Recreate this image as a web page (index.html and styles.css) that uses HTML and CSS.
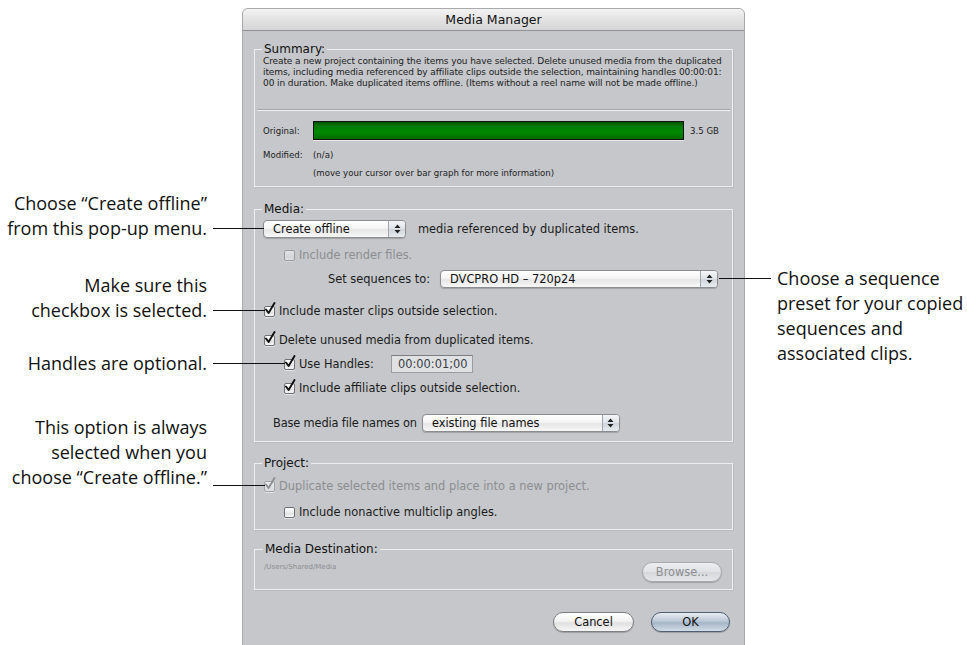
FILE: index.html
```html
<!DOCTYPE html>
<html>
<head>
<meta charset="utf-8">
<link rel="stylesheet" href="styles.css">
</head>
<body>
<div class="page">
  <div class="dialog">
    <div class="titlebar">Media Manager</div>
    <div class="content">
      <fieldset class="group summary">
        <legend>Summary:</legend>
        <p class="summary-text">Create a new project containing the items you have selected. Delete unused media from the duplicated<br>items, including media referenced by affiliate clips outside the selection, maintaining handles 00:00:01:<br>00 in duration. Make duplicated items offline. (Items without a reel name will not be made offline.)</p>
        <div class="sep"></div>
        <div class="stat-row original">
          <span class="stat-label">Original:</span>
          <span class="bar"></span>
          <span class="stat-size">3.5 GB</span>
        </div>
        <div class="stat-row modified">
          <span class="stat-label">Modified:</span>
          <span>(n/a)</span>
        </div>
        <div class="hint">(move your cursor over bar graph for more information)</div>
      </fieldset>

      <fieldset class="group media">
        <legend>Media:</legend>
        <div class="row r-create">
          <span class="popup popup-create"><span class="popup-label">Create offline</span><span class="popup-arrows"><svg width="7" height="10" viewBox="0 0 7 10"><path d="M3.5 0.5 L6.5 4 L0.5 4 Z M3.5 9.5 L6.5 6 L0.5 6 Z" fill="#222"/></svg></span></span>
          <span class="txt">media referenced by duplicated items.</span>
        </div>
        <div class="row r-render indent2 disabled">
          <span class="cb cb-off"></span>
          <span class="txt">Include render files.</span>
        </div>
        <div class="row r-seq">
          <span class="txt seq-label">Set sequences to:</span>
          <span class="popup popup-seq"><span class="popup-label">DVCPRO HD – 720p24</span><span class="popup-arrows"><svg width="7" height="10" viewBox="0 0 7 10"><path d="M3.5 0.5 L6.5 4 L0.5 4 Z M3.5 9.5 L6.5 6 L0.5 6 Z" fill="#222"/></svg></span></span>
        </div>
        <div class="row r-master indent1">
          <span class="cb"><svg class="check" width="12" height="13" viewBox="0 0 12 13"><path d="M2 7.5 L4.6 11 L10.5 1" fill="none" stroke="#111" stroke-width="1.9" stroke-linecap="round" stroke-linejoin="round"/></svg></span>
          <span class="txt">Include master clips outside selection.</span>
        </div>
        <div class="row r-delete indent1">
          <span class="cb"><svg class="check" width="12" height="13" viewBox="0 0 12 13"><path d="M2 7.5 L4.6 11 L10.5 1" fill="none" stroke="#111" stroke-width="1.9" stroke-linecap="round" stroke-linejoin="round"/></svg></span>
          <span class="txt">Delete unused media from duplicated items.</span>
        </div>
        <div class="row r-handles indent2">
          <span class="cb"><svg class="check" width="12" height="13" viewBox="0 0 12 13"><path d="M2 7.5 L4.6 11 L10.5 1" fill="none" stroke="#111" stroke-width="1.9" stroke-linecap="round" stroke-linejoin="round"/></svg></span>
          <span class="txt handles-label">Use Handles:</span>
          <span class="field">00:00:01;00</span>
        </div>
        <div class="row r-affiliate indent2">
          <span class="cb"><svg class="check" width="12" height="13" viewBox="0 0 12 13"><path d="M2 7.5 L4.6 11 L10.5 1" fill="none" stroke="#111" stroke-width="1.9" stroke-linecap="round" stroke-linejoin="round"/></svg></span>
          <span class="txt">Include affiliate clips outside selection.</span>
        </div>
        <div class="row r-base">
          <span class="txt">Base media file names on</span>
          <span class="popup popup-base"><span class="popup-label">existing file names</span><span class="popup-arrows"><svg width="7" height="10" viewBox="0 0 7 10"><path d="M3.5 0.5 L6.5 4 L0.5 4 Z M3.5 9.5 L6.5 6 L0.5 6 Z" fill="#222"/></svg></span></span>
        </div>
      </fieldset>

      <fieldset class="group project">
        <legend>Project:</legend>
        <div class="row r-dup indent1 disabled">
          <span class="cb cb-dis"><svg class="check" width="12" height="13" viewBox="0 0 12 13"><path d="M2 7.5 L4.6 11 L10.5 1" fill="none" stroke="#8d8f92" stroke-width="1.9" stroke-linecap="round" stroke-linejoin="round"/></svg></span>
          <span class="txt">Duplicate selected items and place into a new project.</span>
        </div>
        <div class="row r-nonactive indent2">
          <span class="cb"></span>
          <span class="txt">Include nonactive multiclip angles.</span>
        </div>
      </fieldset>

      <fieldset class="group dest">
        <legend>Media Destination:</legend>
        <div class="dest-row">
          <span class="path">/Users/Shared/Media</span>
          <span class="btn btn-disabled">Browse...</span>
        </div>
      </fieldset>

      <div class="actions">
        <span class="btn btn-cancel">Cancel</span>
        <span class="btn btn-ok">OK</span>
      </div>
    </div>
  </div>

  <div class="callout left c-create">
    <div class="callout-text">Choose “Create offline”<br>from this pop-up menu.</div>
    <span class="leader"></span>
  </div>
  <div class="callout left c-master">
    <div class="callout-text">Make sure this<br>checkbox is selected.</div>
    <span class="leader"></span>
  </div>
  <div class="callout left c-handles">
    <div class="callout-text">Handles are optional.</div>
    <span class="leader"></span>
  </div>
  <div class="callout left c-dup">
    <div class="callout-text">This option is always<br>selected when you<br>choose “Create offline.”</div>
    <span class="leader"></span>
  </div>
  <div class="callout right c-seq">
    <span class="leader"></span>
    <div class="callout-text">Choose a sequence<br>preset for your copied<br>sequences and<br>associated clips.</div>
  </div>
</div>
</body>
</html>
```

FILE: styles.css
```css
* { box-sizing: border-box; }

html, body {
  margin: 0;
  padding: 0;
  background: #ffffff;
}

.page {
  position: relative;
  width: 967px;
  height: 645px;
  overflow: hidden;
  padding: 8px 0 0 242px;
  font-family: "DejaVu Sans", sans-serif;
  color: #1a1a1a;
}

.dialog {
  width: 503px;
  height: 660px;
  background: #c5c7ca;
  border: 1px solid #a7a9ac;
  border-radius: 6px 6px 0 0;
}

.titlebar {
  height: 22px;
  line-height: 21px;
  text-align: center;
  font-size: 12.5px;
  color: #111;
  background: linear-gradient(#f3f3f3, #e0e0e0 60%, #d6d6d6);
  border-bottom: 1px solid #8f9194;
  border-radius: 5px 5px 0 0;
}

.content {
  padding: 12px 11px 0 11px;
}

.group {
  margin: 0;
  padding: 0 8px;
  border: 1px solid #eceef0;
  box-shadow: 1px 1px 0 rgba(0,0,0,0.06);
  min-width: 0;
}

.group legend {
  font-size: 12px;
  line-height: 13px;
  padding: 0 2px;
  margin-left: -1px;
  color: #111;
}

/* ---------- summary ---------- */
.summary {
  padding-bottom: 8px;
}

.summary-text {
  margin: 0;
  font-size: 9px;
  line-height: 11px;
  white-space: nowrap;
  letter-spacing: -0.1px;
  color: #222;
}

.sep {
  height: 1px;
  margin: 21px -6px 0 -6px;
  background: #f0f1f2;
  box-shadow: 0 -1px 0 #a5a7aa;
}

.stat-row {
  display: flex;
  align-items: center;
  font-size: 8.6px;
  color: #222;
}

.original {
  margin-top: 10px;
}

.stat-label {
  width: 50px;
}

.bar {
  width: 371px;
  height: 19px;
  background: linear-gradient(#005400, #007f00 30%, #008a00 60%, #006a00);
  border: 1px solid #111;
  box-shadow: 0 1px 0 #e8e8e8;
}

.stat-size {
  margin-left: 6px;
}

.modified {
  margin-top: 9px;
  height: 12px;
}

.hint {
  margin-top: 7px;
  margin-left: 50px;
  font-size: 8.6px;
  line-height: 10px;
  color: #222;
}

/* ---------- media ---------- */
.media {
  margin-top: 16px;
  padding: 2px 8px 9px 8px;
}

.row {
  display: flex;
  align-items: center;
  font-size: 11.4px;
  height: 18px;
  white-space: nowrap;
}

.indent1 { padding-left: 1px; }
.indent2 { padding-left: 21px; }

.txt { color: #1b1b1b; }

.disabled .txt { color: #8c8e91; }

.r-create { margin-top: 2px; }
.r-create .txt { margin-left: 12px; }
.r-render { margin-top: 8px; }
.r-seq { margin-top: 6px; padding-left: 65px; }
.seq-label { margin-right: 10px; }
.r-master { margin-top: 14px; }
.r-delete { margin-top: 11px; }
.r-handles { margin-top: 6px; }
.r-affiliate { margin-top: 6px; }
.r-base { margin-top: 17px; padding-left: 10px; }
.r-base .txt { margin-right: 5px; letter-spacing: -0.15px; }

.cb {
  position: relative;
  flex: none;
  width: 11px;
  height: 11px;
  margin-right: 4px;
  border: 1px solid #6f7174;
  border-radius: 2px;
  background: linear-gradient(#ffffff, #ececec 50%, #dedede 51%, #f7f7f7);
  box-shadow: 0 1px 0 rgba(255,255,255,0.5);
}

.cb-off { opacity: 0.5; }
.cb-dis { border-color: #a2a4a7; background: linear-gradient(#e9eaeb, #dadbdc); }

.check {
  position: absolute;
  left: -1px;
  top: -5px;
}

.popup {
  display: inline-flex;
  flex: none;
  align-items: stretch;
  height: 18px;
  border: 1px solid #8a8c8f;
  border-radius: 4px;
  background: linear-gradient(#ffffff, #f4f4f4 45%, #e6e6e6 55%, #f8f8f8);
  box-shadow: 0 1px 1px rgba(0,0,0,0.18);
  font-size: 11.4px;
  color: #111;
}

.popup-label {
  flex: 1;
  display: flex;
  align-items: center;
  padding-left: 9px;
}

.popup-arrows {
  width: 17px;
  display: flex;
  align-items: center;
  justify-content: center;
  border-left: 1px solid #a3a5a8;
  border-radius: 0 3px 3px 0;
  background: linear-gradient(#f3f5f8, #dfe3e8 50%, #cfd5dc 51%, #e8ecf0);
}

.popup-create { width: 143px; }
.popup-seq { width: 278px; }
.popup-base { width: 198px; }

.handles-label { width: 92px; }

.field {
  display: inline-flex;
  align-items: center;
  height: 18px;
  width: 82px;
  padding-left: 6px;
  background: #dfe1e3;
  border: 1px solid #9a9c9f;
  border-top-color: #7c7e81;
  color: #3a3d44;
  font-size: 11.4px;
}

/* ---------- project ---------- */
.project {
  margin-top: 15px;
  padding: 7px 8px 8px 8px;
}

.r-nonactive { margin-top: 8px; }

/* ---------- destination ---------- */
.dest {
  margin-top: 13px;
  padding: 0 10px 7px 9px;
}

.dest-row {
  display: flex;
  align-items: flex-start;
  justify-content: space-between;
}

.path {
  font-size: 7px;
  color: #8c8e91;
  margin-top: 7px;
}

.btn {
  display: inline-flex;
  align-items: center;
  justify-content: center;
  height: 20px;
  border-radius: 10px;
  font-size: 11.4px;
  border: 1px solid #7d7f82;
  background: linear-gradient(#ffffff, #f2f2f2 45%, #e0e0e0 55%, #f7f7f7);
  box-shadow: 0 1px 1px rgba(0,0,0,0.2);
  color: #111;
}

.btn-disabled {
  width: 80px;
  margin-top: 6px;
  color: #8c8e91;
  border-color: #a8aaad;
  background: linear-gradient(#eceeef, #dfe1e3 50%, #d5d7da 51%, #e4e6e8);
}

.actions {
  display: flex;
  justify-content: flex-end;
  gap: 17px;
  padding-right: 3px;
  margin-top: 22px;
}

.btn-cancel { width: 81px; }
.btn-ok {
  width: 79px;
  border-color: #4f5e72;
  background: linear-gradient(#e8edf3, #bcc8d6 45%, #a6b5c7 55%, #d3dde8);
}

/* ---------- callouts ---------- */
.callout {
  position: absolute;
  display: flex;
  align-items: flex-end;
  font-family: "Open Sans", "Lato", sans-serif;
  font-size: 18px;
  line-height: 25px;
  color: #111;
}

.callout.left {
  left: 0;
  justify-content: flex-end;
}

.callout.left .callout-text { text-align: right; }

.leader {
  display: block;
  height: 1px;
  background: #111;
  margin-bottom: 12px;
}

.callout.left .leader { margin-left: 6px; }

.c-create { top: 191px; width: 264px; }
.c-create .leader { width: 51px; }

.c-master { top: 273px; width: 265px; }
.c-master .leader { width: 52px; }

.c-handles { top: 351px; width: 285px; }
.c-handles .leader { width: 72px; }

.c-dup { top: 415px; width: 265px; }
.c-dup .leader { width: 52px; margin-bottom: 4px; }

.c-seq {
  top: 266px;
  left: 719px;
  align-items: flex-start;
}
.c-seq .leader { width: 52px; margin: 12px 6px 0 0; }
```
